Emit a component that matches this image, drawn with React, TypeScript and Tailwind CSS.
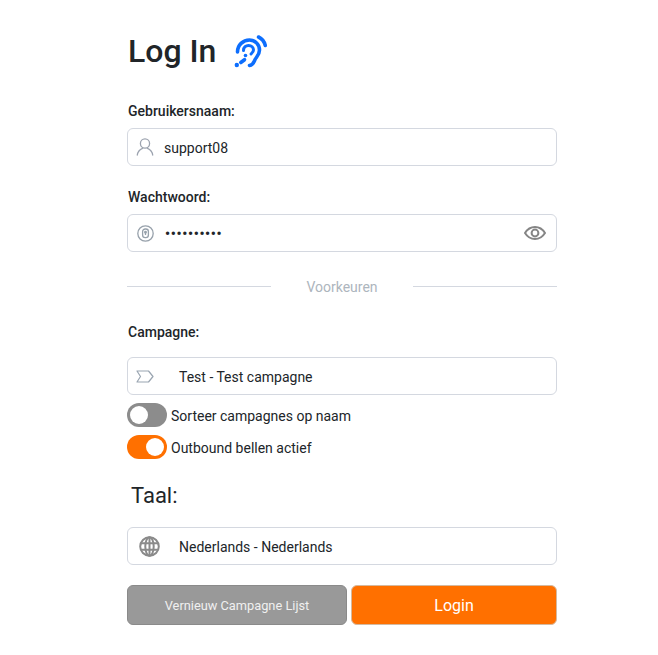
import React from "react";

function Ear() {
  return (
    <svg className="mt-[2px]" width="42" height="40" viewBox="230 32 42 40" fill="none" stroke="#0d6efd" strokeWidth="3.6" strokeLinecap="round">
      <path d="M258.5 37C262 38.6 264.3 41.6 265.3 45.5" />
      <path d="M237.5 52C237.5 45 243 40 249.5 40C255.5 40 259.5 45 259.5 50C259.5 54 257.5 56 256 58C254 60.5 254.5 64.5 249.5 65.5" />
      <path d="M243.5 50.5C243.5 47 246 45.5 248.5 45.5C251.5 45.5 253.5 47.5 253.5 50C253.5 52 252 53 251 54" strokeWidth="3" />
      <path d="M240.8 62.5L244.5 59.7" />
      <circle cx="245.5" cy="55.5" r="1.8" fill="#0d6efd" stroke="none" />
      <circle cx="236.8" cy="65" r="2.2" fill="#0d6efd" stroke="none" />
    </svg>
  );
}

function User() {
  return (
    <svg width="18" height="18" viewBox="0 0 18 18" fill="none" stroke="#9ca3af" strokeWidth="1.3" strokeLinecap="round">
      <circle cx="9" cy="5.5" r="4.6" />
      <path d="M1.3 17C1.8 13.5 4 11.3 6.5 10.3M16.7 17C16.2 13.5 14 11.3 11.5 10.3" />
    </svg>
  );
}

function LockCircle() {
  return (
    <svg width="17" height="17" viewBox="0 0 17 17" fill="none" stroke="#97a1ab" strokeWidth="1.3">
      <circle cx="8.5" cy="8.5" r="7.7" />
      <rect x="5.6" y="4" width="5.8" height="8.6" rx="2.6" />
      <circle cx="8.5" cy="7.2" r="0.8" fill="#97a1ab" />
      <path d="M8.5 7.5V10" />
    </svg>
  );
}

function Eye() {
  return (
    <svg width="22" height="14" viewBox="0 0 22 14" fill="none" stroke="#858585" strokeWidth="2">
      <path d="M1 7C3.5 3 7 1 11 1C15 1 18.5 3 21 7C18.5 11 15 13 11 13C7 13 3.5 11 1 7Z" />
      <circle cx="11" cy="7" r="3.4" />
    </svg>
  );
}

function Tag() {
  return (
    <svg width="18" height="13" viewBox="0 0 18 13" fill="none" stroke="#9aa5b1" strokeWidth="1.2" strokeLinejoin="round">
      <path d="M1 1H12.5L17 6.5L12.5 12H1L4.5 6.5Z" />
    </svg>
  );
}

function Globe() {
  return (
    <svg width="21" height="21" viewBox="0 0 21 21" fill="none" stroke="#8a8a8a" strokeWidth="2">
      <circle cx="10.5" cy="10.5" r="9.3" />
      <ellipse cx="10.5" cy="10.5" rx="4.2" ry="9.3" />
      <path d="M2 7.2H19M2 13.8H19M10.5 1V20" />
    </svg>
  );
}

function Field({ icon, children, w = "w-[18px]" }: { icon: React.ReactNode; children: React.ReactNode; w?: string }) {
  return (
    <div className="flex h-[38px] items-center rounded-md border border-[#d4d8e0] bg-white pl-[8px]">
      <span className={`flex shrink-0 items-center justify-center ${w}`}>{icon}</span>
      {children}
    </div>
  );
}

function Toggle({ on, label }: { on: boolean; label: string }) {
  return (
    <div className="flex h-6 items-center gap-1">
      <span className={`flex h-6 w-10 items-center rounded-full p-[3px] ${on ? "justify-end bg-[#ff7000]" : "justify-start bg-[#8c8c8c]"}`}>
        <span className="h-[18px] w-[18px] rounded-full bg-white" />
      </span>
      <span className="pt-[2px] text-[14px] text-[#212529]">{label}</span>
    </div>
  );
}

export default function App() {
  return (
    <div className="min-h-[655px] bg-white font-['Roboto',sans-serif] text-[#212529]">
      <div className="ml-[127px] flex w-[430px] flex-col pt-[28px]">
        <div className="flex h-[46px] items-center gap-[14px]">
          <h1 className="ml-px text-[32px] font-medium leading-none">Log In</h1>
          <Ear />
        </div>
        <label className="ml-px mt-[27px] text-[14px] font-medium leading-5">Gebruikersnaam:</label>
        <div className="mt-[7px]">
          <Field icon={<User />}>
            <span className="ml-[10px] pt-[2px] text-[14px] text-[#212529]">support08</span>
          </Field>
        </div>
        <label className="ml-px mt-[21px] text-[14px] font-medium leading-5">Wachtwoord:</label>
        <div className="mt-[7px]">
          <Field icon={<LockCircle />}>
            <span className="ml-[11px] flex-1 pt-[2px] text-[14px] font-bold tracking-[0.7px]">••••••••••</span>
            <span className="mr-[10px] flex"><Eye /></span>
          </Field>
        </div>
        <div className="mt-[25px] flex h-5 items-center">
          <div className="mb-[2px] h-px w-[144px] bg-[#d4d8e0]" />
          <span className="flex-1 text-center text-[14px] text-[#adb5bd]">Voorkeuren</span>
          <div className="mb-[2px] h-px w-[144px] bg-[#d4d8e0]" />
        </div>
        <label className="ml-px mt-[25px] text-[14px] font-medium leading-5">Campagne:</label>
        <div className="mt-[15px]">
          <Field icon={<Tag />}>
            <span className="ml-[25px] pt-[2px] text-[14px]">Test - Test campagne</span>
          </Field>
        </div>
        <div className="mt-2 flex flex-col gap-[8px]">
          <Toggle on={false} label="Sorteer campagnes op naam" />
          <Toggle on label="Outbound bellen actief" />
        </div>
        <div className="mt-[22px] pl-[4px] text-[22px] leading-[30px]">Taal:</div>
        <div className="mt-[16px]">
          <Field icon={<Globe />} w="w-[26px]">
            <span className="ml-[17px] pt-[2px] text-[14px]">Nederlands - Nederlands</span>
          </Field>
        </div>
        <div className="mt-5 flex gap-1">
          <button className="h-10 w-[220px] rounded-md border border-[#8a8a8a] bg-[#999999] pt-[2px] text-[12.8px] text-[#f0f0f0]">Vernieuw Campagne Lijst</button>
          <button className="h-10 flex-1 rounded-md border border-[#d4b9a0] bg-[#ff7000] pt-[2px] text-[16px] text-white">Login</button>
        </div>
      </div>
    </div>
  );
}
